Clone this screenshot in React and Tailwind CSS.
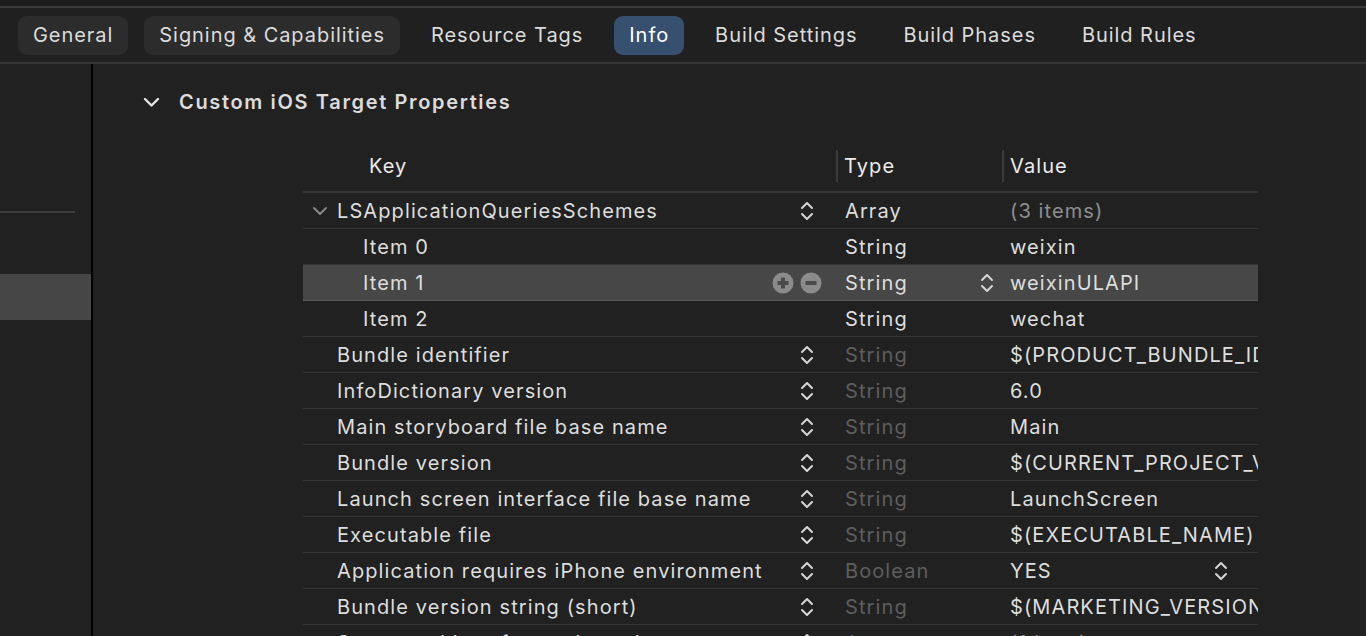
import React from "react"

const TABS = ["General", "Signing & Capabilities", "Resource Tags", "Info", "Build Settings", "Build Phases", "Build Rules"]

const ROWS = [
  { key: "LSApplicationQueriesSchemes", level: 0, open: true, step: true, type: "Array", typeOn: true, value: "(3 items)", muted: true },
  { key: "Item 0", level: 1, type: "String", typeOn: true, value: "weixin" },
  { key: "Item 1", level: 1, type: "String", typeOn: true, value: "weixinULAPI", selected: true },
  { key: "Item 2", level: 1, type: "String", typeOn: true, value: "wechat" },
  { key: "Bundle identifier", level: 0, step: true, type: "String", value: "$(PRODUCT_BUNDLE_IDENTIFIER)" },
  { key: "InfoDictionary version", level: 0, step: true, type: "String", value: "6.0" },
  { key: "Main storyboard file base name", level: 0, step: true, type: "String", value: "Main" },
  { key: "Bundle version", level: 0, step: true, type: "String", value: "$(CURRENT_PROJECT_VERSION)" },
  { key: "Launch screen interface file base name", level: 0, step: true, type: "String", value: "LaunchScreen" },
  { key: "Executable file", level: 0, step: true, type: "String", value: "$(EXECUTABLE_NAME)" },
  { key: "Application requires iPhone environment", level: 0, step: true, type: "Boolean", value: "YES", valueStep: true },
  { key: "Bundle version string (short)", level: 0, step: true, type: "String", value: "$(MARKETING_VERSION)" },
  { key: "Supported interface orientations", level: 0, closed: true, step: true, type: "Array", value: "(1 item)", muted: true },
]

function Stepper({ color = "#d6d6d6" }) {
  return (
    <svg width="14" height="22" viewBox="0 0 14 22" fill="none" stroke={color} strokeWidth="2" strokeLinecap="round" strokeLinejoin="round">
      <path d="M2 8 L7 3 L12 8" />
      <path d="M2 14 L7 19 L12 14" />
    </svg>
  )
}

function RoundBtn({ plus }) {
  return (
    <svg width="22" height="22" viewBox="0 0 22 22">
      <circle cx="11" cy="11" r="10.5" fill="#8b8b8b" />
      <rect x="5.5" y="9" width="11" height="4" rx="0.5" fill="#4a4a4a" />
      {plus && <rect x="9" y="5.5" width="4" height="11" rx="0.5" fill="#4a4a4a" />}
    </svg>
  )
}

function Row({ r }) {
  return (
    <div
      className={`grid grid-cols-[533px_166px_256px] h-[36px] items-center border-b ${
        r.selected ? "bg-[#474747] border-[#5a5a5a]" : "border-[#353535]"
      }`}
    >
      <div className="relative flex items-center h-full">
        {r.open && (
          <svg className="absolute left-[9px]" width="16" height="10" viewBox="0 0 16 10" fill="none" stroke="#8c8c8c" strokeWidth="1.8" strokeLinecap="round" strokeLinejoin="round">
            <path d="M2 2 L8 8 L14 2" />
          </svg>
        )}
        {r.closed && (
          <svg className="absolute left-[12px]" width="10" height="16" viewBox="0 0 10 16" fill="none" stroke="#8c8c8c" strokeWidth="1.8" strokeLinecap="round" strokeLinejoin="round">
            <path d="M2 2 L8 8 L2 14" />
          </svg>
        )}
        <span className={`${r.level ? "pl-[60px]" : "pl-[34px]"} text-[#dedede] whitespace-nowrap`}>{r.key}</span>
        {r.step && (
          <span className="absolute right-[22px] top-[7px]">
            <Stepper />
          </span>
        )}
        {r.selected && (
          <span className="absolute right-[14px] top-[7px] flex gap-[6px]">
            <RoundBtn plus />
            <RoundBtn />
          </span>
        )}
      </div>
      <div className="relative flex items-center h-full pl-[9px]">
        <span className={r.typeOn ? "text-[#dedede]" : "text-[#5e5e5e]"}>{r.type}</span>
        {r.selected && (
          <span className="absolute right-[8px] top-[7px]">
            <Stepper />
          </span>
        )}
      </div>
      <div className="relative flex items-center h-full pl-[8px] pr-[10px] overflow-hidden">
        <span className={`whitespace-nowrap ${r.muted ? "text-[#8e8e8e]" : "text-[#dedede]"}`}>{r.value}</span>
        {r.valueStep && (
          <span className="absolute right-[30px] top-[7px]">
            <Stepper />
          </span>
        )}
      </div>
    </div>
  )
}

export default function App() {
  return (
    <div
      className="h-[636px] w-[1366px] overflow-hidden bg-[#212121] text-[20px] tracking-[1.1px] flex flex-col"
      style={{ fontFamily: "Inter, 'Noto Sans', sans-serif" }}
    >
      <div className="h-[8px] bg-[#1d1d1d] border-b-2 border-[#3a3a3a] shrink-0" />

      {/* tab bar */}
      <div className="h-[56px] shrink-0 flex items-center gap-[16px] pl-[18px] tracking-[0.95px] border-b-2 border-[#363636] bg-[#202020]">
        {TABS.map((t) => (
          <div
            key={t}
            className={`h-[39px] px-[15px] rounded-[9px] flex items-center whitespace-nowrap ${
              t === "Info"
                ? "bg-[#37506f] text-white"
                : t === "General" || t === "Signing & Capabilities"
                ? "bg-[#2c2c2c] text-[#dcdcdc]"
                : "text-[#dcdcdc]"
            }`}
          >
            {t}
          </div>
        ))}
      </div>

      <div className="flex flex-1 min-h-0">
        {/* sidebar */}
        <aside className="w-[93px] shrink-0 border-r-2 border-black flex flex-col">
          <div className="h-[147px]" />
          <div className="h-[1.5px] w-[75px] bg-[#3c3c3c]" />
          <div className="h-[61px]" />
          <div className="h-[46px] bg-[#464646]" />
        </aside>

        {/* content */}
        <main className="flex-1 min-w-0">
          <div className="flex items-center h-[76px] pl-[50px]">
            <svg width="17" height="11" viewBox="0 0 17 11" fill="none" stroke="#e6e6e6" strokeWidth="2.4" strokeLinecap="round" strokeLinejoin="round">
              <path d="M2 2 L8.5 8.5 L15 2" />
            </svg>
            <h2 className="ml-[19px] font-semibold tracking-[1.65px] text-[#dcdcdc]">Custom iOS Target Properties</h2>
          </div>

          <div className="ml-[210px] w-[955px]">
            <div className="grid grid-cols-[533px_166px_256px] h-[53px] items-center border-b-2 border-[#363636]">
              <div className="pl-[66px] text-[#ececec]">Key</div>
              <div className="border-l-2 border-[#3c3c3c] pl-[6px] h-[32px] flex items-center text-[#ececec]">Type</div>
              <div className="border-l-2 border-[#3c3c3c] pl-[6px] h-[32px] flex items-center text-[#ececec]">Value</div>
            </div>
            {ROWS.map((r) => (
              <Row key={r.key} r={r} />
            ))}
          </div>
        </main>
      </div>
    </div>
  )
}
